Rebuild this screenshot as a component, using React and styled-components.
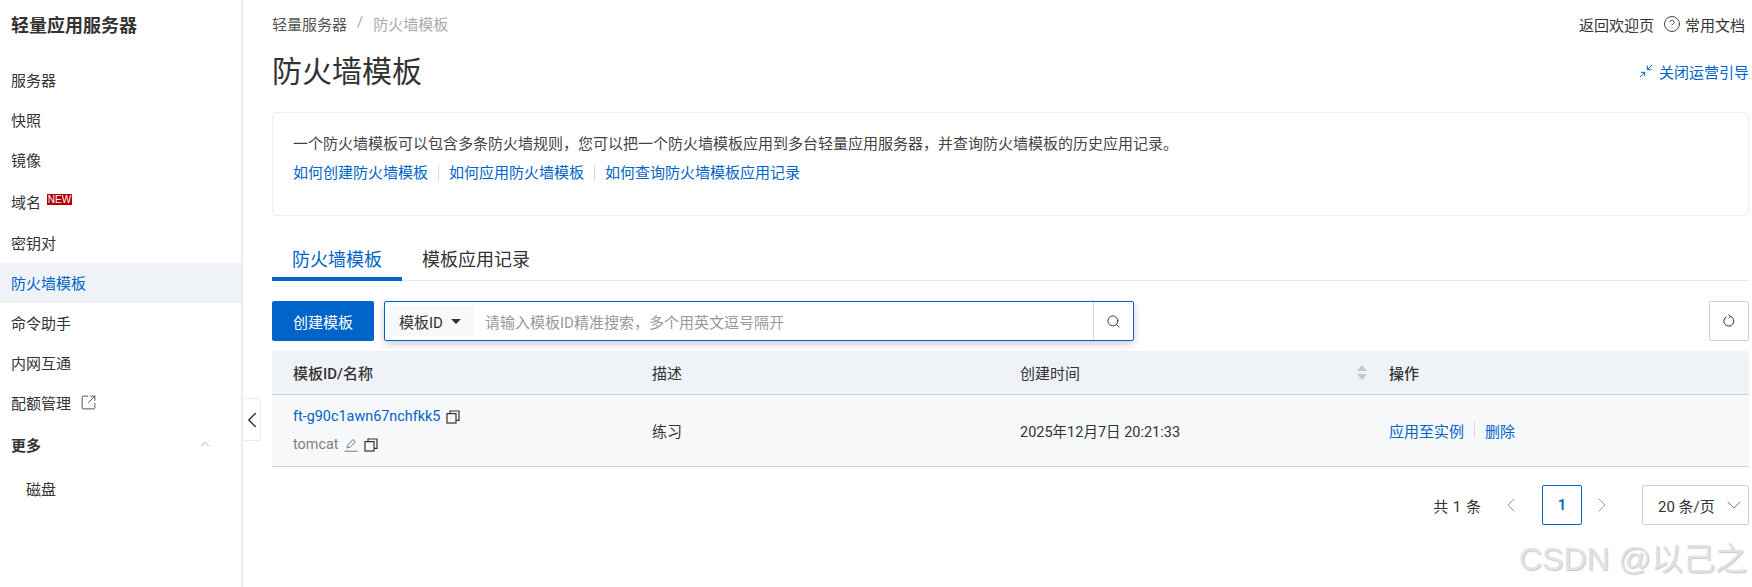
import React from 'react'
import styled, { createGlobalStyle } from 'styled-components'
import { ChevronLeft, ChevronRight, ChevronUp, ChevronDown, Search, SquareArrowOutUpRight, CircleHelp } from 'lucide-react'

const BLUE = '#0064c8'
const FONT = 'Roboto, "Noto Sans CJK SC", sans-serif'

const Global = createGlobalStyle`
  html, body { margin: 0; padding: 0; background: #fff; }
  body { font-family: ${FONT}; font-size: 15px; color: #333; overflow: hidden; }
  * { box-sizing: border-box; }
`

const Page = styled.div`
  position: relative;
  display: flex;
  width: 1752px;
  height: 587px;
  overflow: hidden;
`

// Sidebar
const Sidebar = styled.aside`
  width: 243px;
  flex: none;
  border-right: 2px solid #e9ebee;
`

const SideTitle = styled.div`
  height: 54px;
  padding-left: 11px;
  font-size: 18px;
  font-weight: 700;
  line-height: 52px;
  margin-bottom: 6px;
`

const NavItem = styled.div`
  display: flex;
  align-items: center;
  height: 40px;
  margin-top: ${p => p.$gap || 0}px;
  padding-left: ${p => p.$indent || 11}px;
  padding-bottom: 2px;
  color: ${p => (p.$active ? BLUE : '#333')};
  background: ${p => (p.$active ? '#eff2f7' : 'transparent')};
  font-weight: ${p => (p.$bold ? 700 : 400)};
`

const NewBadge = styled.span`
  align-self: flex-start;
  margin: 12px 0 0 6px;
  width: 25px;
  height: 11px;
  background: #b00000;
  color: #fff;
  font-family: "Liberation Sans", sans-serif;
  font-size: 10px;
  line-height: 11px;
  text-align: center;
`

const MoreArrow = styled(ChevronUp)`
  margin-left: auto;
  margin-right: 29px;
  color: #888;
`

const LinkIcon = styled(SquareArrowOutUpRight)`
  margin-left: 9px;
`

const Handle = styled.div`
  position: absolute;
  left: 243px;
  top: 398px;
  width: 18px;
  height: 43px;
  display: flex;
  align-items: center;
  justify-content: center;
  background: #fff;
  border: 1px solid #eaecef;
  border-left: 0;
  border-radius: 0 3px 3px 0;
  svg { flex: none; }
`

// Main column
const Main = styled.main`
  flex: 1;
  padding: 0 3px 0 29px;
`

const TopBar = styled.div`
  display: flex;
  justify-content: space-between;
  align-items: center;
  height: 48px;
`

const Crumbs = styled.div`
  display: flex;
  gap: 10px;
  margin-top: -2px;
  color: #555;
`

const CrumbMuted = styled.span`
  color: #aaa;
`

const TopLinks = styled.div`
  display: flex;
  align-items: center;
  margin-right: 4px;
`

const DocLink = styled.span`
  display: flex;
  align-items: center;
  gap: 4px;
  margin-left: 9px;
`

const TitleRow = styled.div`
  display: flex;
  justify-content: space-between;
  align-items: center;
  height: 46px;
`

const PageTitle = styled.h1`
  margin: 1px 0 0;
  font-size: 30px;
  font-weight: 400;
  line-height: 46px;
`

const CloseGuide = styled.span`
  display: flex;
  align-items: center;
  gap: 6px;
  color: ${BLUE};
`

const InfoCard = styled.section`
  height: 104px;
  margin-top: 18px;
  padding: 19px 20px 0;
  border: 1px solid #eceef1;
  border-radius: 4px;
`

const InfoText = styled.div`
  line-height: 24px;
  color: #444;
`

const InfoLinks = styled.div`
  display: flex;
  align-items: center;
  margin-top: 5px;
  line-height: 24px;
`

const A = styled.span`
  color: ${BLUE};
`

const Sep = styled.span`
  width: 1px;
  height: 16px;
  margin: 0 ${p => p.$m || 10}px;
  background: #d5d8dc;
`

const Tabs = styled.div`
  display: flex;
  height: 48px;
  margin-top: 17px;
  border-bottom: 1px solid #e5e7ea;
`

const Tab = styled.div`
  height: 48px;
  padding: 15px 20px 0;
  font-size: 18px;
  line-height: 24px;
  color: ${p => (p.$active ? BLUE : '#333')};
  border-bottom: ${p => (p.$active ? `4px solid ${BLUE}` : '0')};
`

const Toolbar = styled.div`
  display: flex;
  align-items: center;
  height: 40px;
  margin-top: 20px;
`

const CreateButton = styled.button`
  width: 102px;
  height: 40px;
  border: 0;
  border-radius: 2px;
  background: ${BLUE};
  color: #fff;
  font: 15px ${FONT};
`

const SearchBox = styled.div`
  display: flex;
  align-items: center;
  width: 750px;
  height: 40px;
  margin-left: 10px;
  padding-left: 4px;
  border: 1px solid ${BLUE};
  border-radius: 2px;
  box-shadow: 0 3px 8px rgba(0, 0, 0, 0.2);
`

const IdSelect = styled.div`
  display: flex;
  align-items: center;
  width: 85px;
  height: 30px;
  padding-left: 10px;
  background: #f7f8fa;
`

const Caret = styled.span`
  width: 0;
  height: 0;
  margin-left: 8px;
  border-left: 5px solid transparent;
  border-right: 5px solid transparent;
  border-top: 5px solid #333;
`

const Placeholder = styled.div`
  flex: 1;
  padding-left: 11px;
  color: #999;
`

const SearchButton = styled.div`
  display: flex;
  align-items: center;
  justify-content: center;
  width: 40px;
  height: 38px;
  border-left: 1px solid #d8d8d8;
`

const RefreshButton = styled.div`
  display: flex;
  align-items: center;
  justify-content: center;
  width: 40px;
  height: 40px;
  margin-left: auto;
  border: 1px solid #d0d0d0;
  border-radius: 2px;
`

// Table
const Row = styled.div`
  display: grid;
  grid-template-columns: 359px 368px 370px 380px;
  align-items: center;
  height: ${p => p.$h}px;
  background: ${p => p.$bg};
  border-bottom: 1px solid #cfd1d6;
`

const HeadRow = styled(Row)`
  margin-top: 10px;
  border-radius: 3px 3px 0 0;
`

const Cell = styled.div`
  display: flex;
  align-items: center;
  padding-left: ${p => p.$pl || 21}px;
  padding-bottom: ${p => p.$pb || 0}px;
`

const HeadCell = styled(Cell)`
  font-weight: ${p => (p.$bold ? 500 : 400)};
`

const NameCell = styled(Cell)`
  display: block;
`

const NameLine = styled.div`
  display: flex;
  align-items: center;
  gap: 6px;
  height: 24px;
  margin-top: ${p => p.$mt || 0}px;
  font-size: 14.4px;
  color: ${p => p.$color || '#333'};
`

const DateText = styled.span`
  font-size: 14.5px;
`

const Sort = styled.span`
  margin-left: auto;
  margin-right: 2px;
  display: flex;
  flex-direction: column;
  gap: 3px;
`

const Tri = styled.span`
  width: 0;
  height: 0;
  border-left: 5px solid transparent;
  border-right: 5px solid transparent;
  border-${p => (p.$up ? 'bottom' : 'top')}: 6px solid #c4c6cc;
`

// Pagination
const Pager = styled.div`
  display: flex;
  align-items: center;
  justify-content: flex-end;
  height: 40px;
  margin-top: 18px;
`

const Total = styled.span`
  margin-right: 18px;
  word-spacing: 1px;
`

const PageNum = styled.span`
  display: flex;
  align-items: center;
  justify-content: center;
  width: 40px;
  height: 40px;
  margin: 0 8px 0 19px;
  border: 1px solid ${BLUE};
  border-radius: 2px;
  color: ${BLUE};
  font-weight: 600;
`

const SizeSelect = styled.div`
  display: flex;
  align-items: center;
  justify-content: space-between;
  width: 107px;
  height: 40px;
  margin-left: 28px;
  padding: 0 2px 0 15px;
  border: 1px solid #d0d0d0;
  border-radius: 2px;
`

const Watermark = styled.div`
  position: absolute;
  right: 5px;
  top: 539px;
  font-family: "Liberation Sans", "Noto Sans CJK SC", sans-serif;
  font-size: 32px;
  line-height: 40px;
  color: #e2e2e2;
  text-shadow: 1px 1px 1px #c8c8c8;
`

const CopyIcon = () => (
  <svg width="14" height="14" viewBox="0 0 14 14" fill="none" stroke="#333" strokeWidth="1.2">
    <rect x="1" y="3.6" width="9" height="9.4" />
    <path d="M4 3.4V1h9v9.4h-2.8" />
  </svg>
)

const EditIcon = () => (
  <svg width="14" height="14" viewBox="0 0 14 14" fill="none" stroke="#777" strokeWidth="1">
    <path d="M3 10l1-3 5-5.5 2.4 2.2-5.2 5.4z" />
    <path d="M0.5 13.2h13" />
  </svg>
)

const CollapseIcon = () => (
  <svg width="14" height="14" viewBox="0 0 14 14" fill="none" stroke={BLUE} strokeWidth="1">
    <path d="M1 13l4.5-4.5M1.8 8.3h3.9v3.9" />
    <path d="M13 1L8.5 5.5M12.4 5.7H8.3V1.6" />
  </svg>
)

const RefreshIcon = () => (
  <svg width="14" height="14" viewBox="0 0 14 14" fill="none" stroke="#333" strokeWidth="1">
    <path d="M8.6 2.4A5 5 0 1 1 4.6 2.6" />
    <path d="M6.4 0.8L8.6 2.4L6.6 4" />
  </svg>
)

const navItems = ['服务器', '快照', '镜像']
const lowerItems = ['命令助手', '内网互通']

export default function App() {
  return (
    <Page>
      <Global />
      <Sidebar>
        <SideTitle>轻量应用服务器</SideTitle>
        {navItems.map(n => <NavItem key={n}>{n}</NavItem>)}
        <NavItem $gap={2}>域名<NewBadge>NEW</NewBadge></NavItem>
        <NavItem $gap={1}>密钥对</NavItem>
        <NavItem $active>防火墙模板</NavItem>
        {lowerItems.map(n => <NavItem key={n}>{n}</NavItem>)}
        <NavItem>配额管理<LinkIcon size={17} strokeWidth={1.2} /></NavItem>
        <NavItem $gap={2} $bold>更多<MoreArrow size={14} strokeWidth={1.2} /></NavItem>
        <NavItem $gap={4} $indent={26}>磁盘</NavItem>
      </Sidebar>
      <Handle><ChevronLeft size={26} strokeWidth={1.3} /></Handle>

      <Main>
        <TopBar>
          <Crumbs>
            <span>轻量服务器</span>
            <CrumbMuted>/</CrumbMuted>
            <CrumbMuted>防火墙模板</CrumbMuted>
          </Crumbs>
          <TopLinks>
            返回欢迎页
            <DocLink><CircleHelp size={18} strokeWidth={1.2} />常用文档</DocLink>
          </TopLinks>
        </TopBar>
        <TitleRow>
          <PageTitle>防火墙模板</PageTitle>
          <CloseGuide><CollapseIcon />关闭运营引导</CloseGuide>
        </TitleRow>

        <InfoCard>
          <InfoText>一个防火墙模板可以包含多条防火墙规则，您可以把一个防火墙模板应用到多台轻量应用服务器，并查询防火墙模板的历史应用记录。</InfoText>
          <InfoLinks>
            <A>如何创建防火墙模板</A><Sep />
            <A>如何应用防火墙模板</A><Sep />
            <A>如何查询防火墙模板应用记录</A>
          </InfoLinks>
        </InfoCard>

        <Tabs>
          <Tab $active>防火墙模板</Tab>
          <Tab>模板应用记录</Tab>
        </Tabs>

        <Toolbar>
          <CreateButton>创建模板</CreateButton>
          <SearchBox>
            <IdSelect>模板ID<Caret /></IdSelect>
            <Placeholder>请输入模板ID精准搜索，多个用英文逗号隔开</Placeholder>
            <SearchButton><Search size={15} strokeWidth={1.5} /></SearchButton>
          </SearchBox>
          <RefreshButton><RefreshIcon /></RefreshButton>
        </Toolbar>

        <HeadRow $h={44} $bg="#eff2f7">
          <HeadCell $bold>模板ID/名称</HeadCell>
          <HeadCell>描述</HeadCell>
          <HeadCell>创建时间<Sort><Tri $up /><Tri /></Sort></HeadCell>
          <HeadCell $bold $pl={20}>操作</HeadCell>
        </HeadRow>
        <Row $h={72} $bg="#f7f8fa">
          <NameCell>
            <NameLine $color={BLUE}>ft-g90c1awn67nchfkk5<CopyIcon /></NameLine>
            <NameLine $mt={4} $color="#808080">tomcat<EditIcon /><CopyIcon /></NameLine>
          </NameCell>
          <Cell $pb={1}>练习</Cell>
          <Cell $pb={1}><DateText>2025年12月7日 20:21:33</DateText></Cell>
          <Cell $pl={20} $pb={1}>
            <A>应用至实例</A><Sep />
            <A>删除</A>
          </Cell>
        </Row>

        <Pager>
          <Total>共 1 条</Total>
          <ChevronLeft size={24} strokeWidth={1} color="#999" />
          <PageNum>1</PageNum>
          <ChevronRight size={24} strokeWidth={1} color="#999" />
          <SizeSelect>20 条/页<ChevronDown size={24} strokeWidth={1} color="#777" /></SizeSelect>
        </Pager>
      </Main>
      <Watermark>CSDN @以己之</Watermark>
    </Page>
  )
}
